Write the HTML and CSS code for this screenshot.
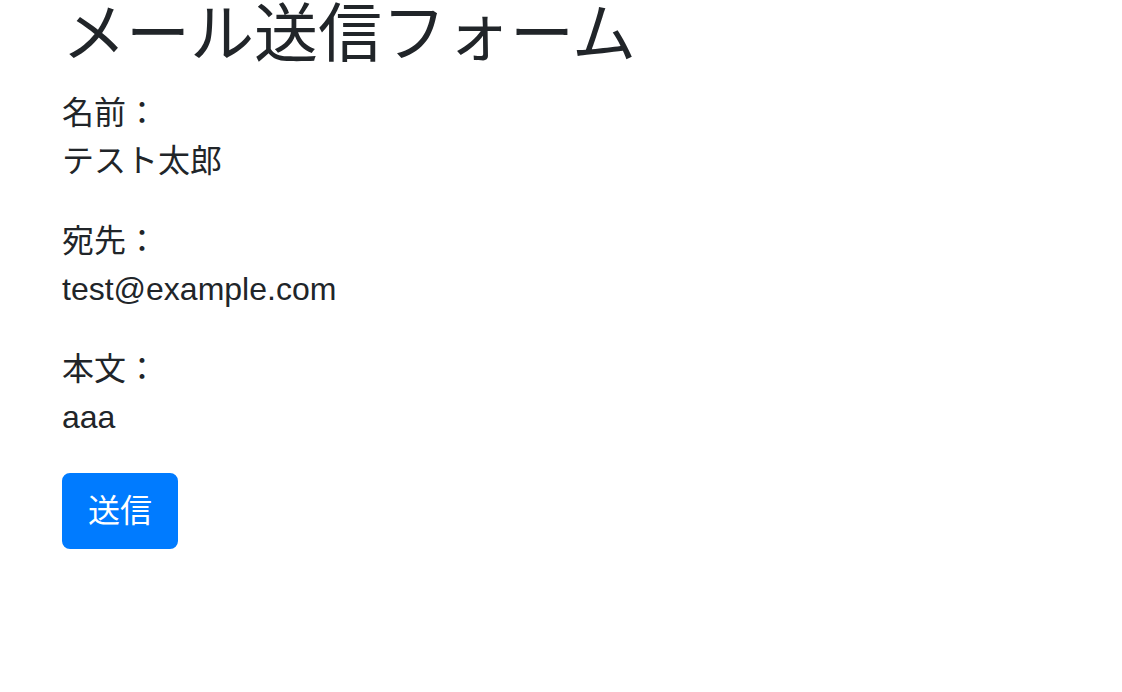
FILE: index.html
```html
<!DOCTYPE html>
<html lang="ja">
<head>
  <meta charset="UTF-8">
  <title>メール送信フォーム</title>
  <link rel="stylesheet" href="styles.css">
</head>
<body>
  <div class="container">
    <h1 class="title">メール送信フォーム</h1>
    <form class="confirm">
      <div class="field">
        <label>名前：</label>
        <p>テスト太郎</p>
      </div>
      <div class="field">
        <label>宛先：</label>
        <p>test@example.com</p>
      </div>
      <div class="field">
        <label>本文：</label>
        <p>aaa</p>
      </div>
      <button type="submit" class="btn">送信</button>
    </form>
  </div>
</body>
</html>
```

FILE: styles.css
```css
body {
  margin: 0;
  background: #fff;
  color: #212529;
  font-family: "Liberation Sans", "Noto Sans CJK JP", sans-serif;
  font-size: 32px;
  line-height: 1.5;
}
.container {
  padding: 0 30px 0 62px;
}
.title {
  font-size: 64px;
  font-weight: 400;
  line-height: 69px;
  margin: 0 0 20px;
}
.field label {
  display: block;
}
.field p {
  margin: 0 0 32px;
}
.btn {
  font-family: inherit;
  font-size: 32px;
  line-height: 1.5;
  color: #fff;
  background: #007bff;
  border: 2px solid #007bff;
  border-radius: 8px;
  padding: 12px 24px;
  cursor: pointer;
}
```
